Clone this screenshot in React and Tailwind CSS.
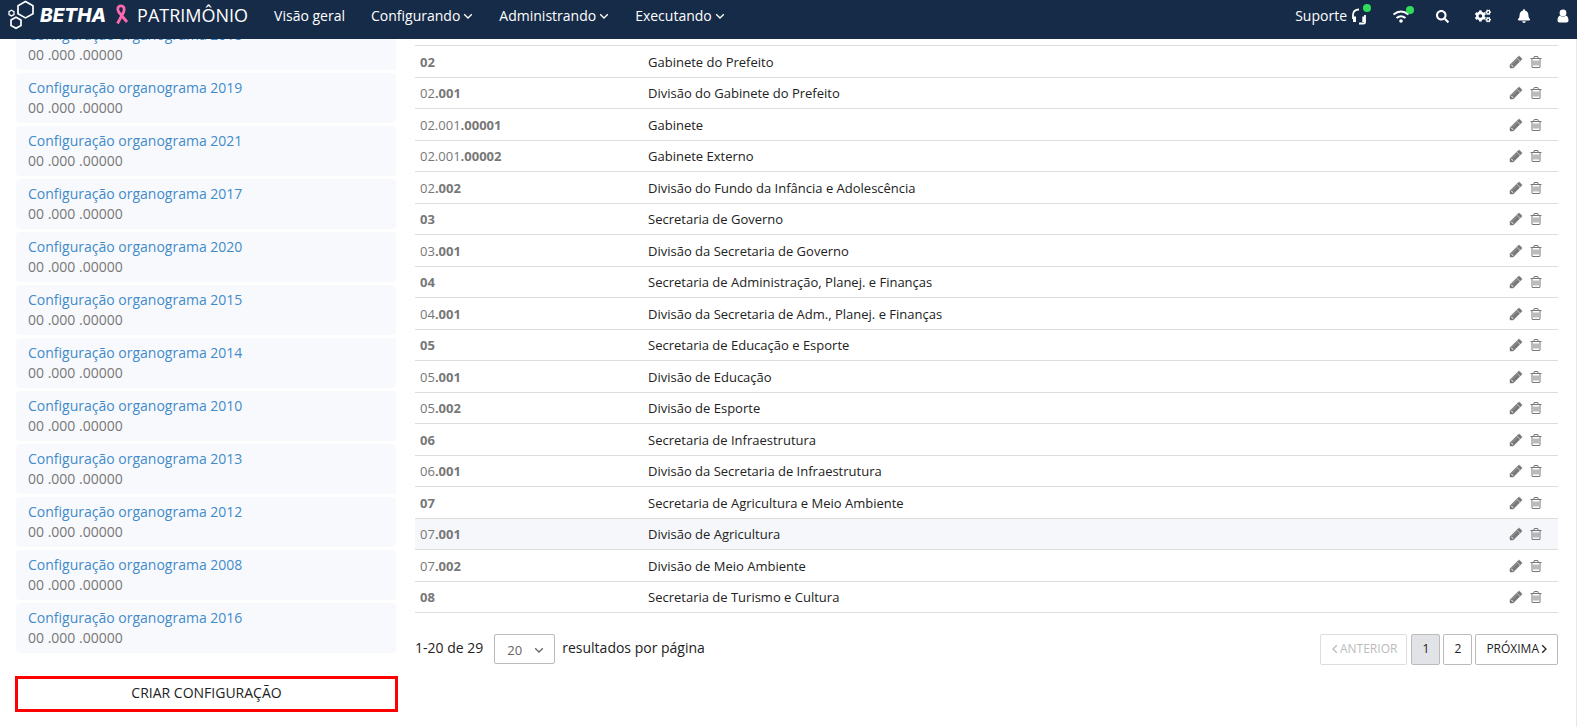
import React from 'react';
import { FaBell, FaCogs, FaSearch } from 'react-icons/fa';

const configs = [2018, 2019, 2021, 2017, 2020, 2015, 2014, 2010, 2013, 2012, 2008, 2016];

const rows = [
  ['', '02', 'Gabinete do Prefeito'],
  ['02', '.001', 'Divisão do Gabinete do Prefeito'],
  ['02.001', '.00001', 'Gabinete'],
  ['02.001', '.00002', 'Gabinete Externo'],
  ['02', '.002', 'Divisão do Fundo da Infância e Adolescência'],
  ['', '03', 'Secretaria de Governo'],
  ['03', '.001', 'Divisão da Secretaria de Governo'],
  ['', '04', 'Secretaria de Administração, Planej. e Finanças'],
  ['04', '.001', 'Divisão da Secretaria de Adm., Planej. e Finanças'],
  ['', '05', 'Secretaria de Educação e Esporte'],
  ['05', '.001', 'Divisão de Educação'],
  ['05', '.002', 'Divisão de Esporte'],
  ['', '06', 'Secretaria de Infraestrutura'],
  ['06', '.001', 'Divisão da Secretaria de Infraestrutura'],
  ['', '07', 'Secretaria de Agricultura e Meio Ambiente'],
  ['07', '.001', 'Divisão de Agricultura'],
  ['07', '.002', 'Divisão de Meio Ambiente'],
  ['', '08', 'Secretaria de Turismo e Cultura'],
];

function Pencil() {
  return (
    <svg viewBox="0 0 1792 1792" className="size-[14px]" fill="currentColor" stroke="currentColor" strokeWidth="60">
      <path d="M491 1536l91-91-235-235-91 91v107h128v128h107zm523-928q0-22-22-22-10 0-17 7l-542 542q-7 7-7 17 0 22 22 22 10 0 17-7l542-542q7-7 7-17zm-54-192l416 416-832 832h-416v-416zm683 96q0 53-37 90l-166 166-416-416 166-165q36-38 90-38 53 0 91 38l235 234q37 39 37 91z" />
    </svg>
  );
}

function Trash() {
  return (
    <svg viewBox="0 0 1792 1792" className="size-[14px]" fill="currentColor">
      <path d="M704 736v576q0 14-9 23t-23 9h-64q-14 0-23-9t-9-23v-576q0-14 9-23t23-9h64q14 0 23 9t9 23zm256 0v576q0 14-9 23t-23 9h-64q-14 0-23-9t-9-23v-576q0-14 9-23t23-9h64q14 0 23 9t9 23zm256 0v576q0 14-9 23t-23 9h-64q-14 0-23-9t-9-23v-576q0-14 9-23t23-9h64q14 0 23 9t9 23zm128 724v-948h-896v948q0 22 7 40.5t14.5 27 10.5 8.5h832q3 0 10.5-8.5t14.5-27 7-40.5zm-672-1076h448l-48-117q-7-9-17-11h-317q-10 2-17 11zm928 32v64q0 14-9 23t-23 9h-96v948q0 83-47 143.5t-113 60.5h-832q-66 0-113-58.5t-47-141.5v-952h-96q-14 0-23-9t-9-23v-64q0-14 9-23t23-9h309l70-167q15-37 54-63t79-26h320q40 0 79 26t54 63l70 167h309q14 0 23 9t9 23z" />
    </svg>
  );
}

function Chevron({ className }) {
  return (
    <svg viewBox="0 0 10 10" className={className} fill="none" stroke="currentColor" strokeWidth="1.300">
      <path d="M1.200 3.200L5 7l3.800-3.800" />
    </svg>
  );
}

function Logo() {
  return (
    <svg viewBox="0 0 28 30" className="h-[30px] w-7" fill="none" stroke="#fff" strokeWidth="1.700">
      <path d="M17.500 1.500l7.500 4.200v8l-7.500 4.200-7.500-4.200v-8z" />
      <path d="M8 17.300l5 2.800v5.400l-5 2.800-5-2.800v-5.400z" />
      <path d="M3.500 10.300l2.500 1.400v2.800l-2.500 1.400-2.500-1.400v-2.800z" strokeWidth="1.300" />
    </svg>
  );
}

function Ribbon() {
  return (
    <svg viewBox="0 0 14 21" className="h-[21px] w-[14px]" fill="none" stroke="#ff69ad" strokeWidth="2.800">
      <path d="M12 18L4 8.500C1.500 5 3 1.800 6 1.800S10 5 8.500 8.500L2.500 19.500" />
    </svg>
  );
}

function Headset() {
  return (
    <svg viewBox="0 0 16 18" className="h-[18px] w-4" fill="none" stroke="#fff">
      <path d="M2 12V8Q2 2.500 8 2.500M14 8v7.500Q14 16.500 12.500 16.500H8" strokeWidth="1.800" />
      <path d="M3.500 9.500v5.500M12.800 9.500v5.500" strokeWidth="3" />
    </svg>
  );
}

function Wifi() {
  return (
    <svg viewBox="0 0 18 14" className="h-[14px] w-[18px]" fill="none" stroke="#fff" strokeWidth="2">
      <path d="M1.500 5.500Q9-.5 16.500 5.500M4.500 9Q9 5.500 13.500 9" />
      <circle cx="9" cy="12" r="1.800" fill="#fff" stroke="none" />
    </svg>
  );
}

function User() {
  return (
    <svg viewBox="0 0 12 14" className="h-[14px] w-3" fill="#fff">
      <circle cx="6" cy="4" r="3.400" />
      <path d="M3 6.500Q6 9 9 6.500Q11.500 7.500 11.500 11.500Q11.500 13.500 9.500 13.500H2.500Q.5 13.500.5 11.500Q.5 7.500 3 6.500z" />
    </svg>
  );
}

function Dot() {
  return <span className="absolute -top-[3px] -right-1 size-2 rounded-full bg-[#2fdc5b]" />;
}

export default function App() {
  return (
    <div className="min-h-screen border-r border-[#e8e8e8] bg-white font-['Open_Sans',sans-serif] text-[14px] leading-5 text-[#222]">
      {/* Top bar */}
      <header className="relative z-10 -mr-px flex h-[39px] items-start bg-[#162b48] px-2 text-white">
        <a href="#" className="flex items-start">
          <Logo />
          <span className="mt-1 ml-1 font-['Inter',sans-serif] text-[19px] leading-6 font-extrabold italic">BETHA</span>
          <span className="mt-1 ml-[9px]"><Ribbon /></span>
          <span className="ml-2 text-[18px] leading-[30px]">PATRIMÔNIO</span>
        </a>
        <nav className="ml-[26px] flex gap-[26px] pt-[6px]">
          <a href="#">Visão geral</a>
          {['Configurando', 'Administrando', 'Executando'].map((item) => (
            <a key={item} href="#" className="flex items-center gap-[3px]">
              {item}
              <Chevron className="size-[10px]" />
            </a>
          ))}
        </nav>
        <div className="ml-auto flex h-8 items-center">
          <a href="#" className="flex items-center gap-1">
            Suporte
            <span className="relative flex"><Headset /><Dot /></span>
          </a>
          <button aria-label="Conexão" className="relative ml-[25px]"><Wifi /><Dot /></button>
          <button aria-label="Buscar" className="ml-[26px]"><FaSearch size={13} /></button>
          <button aria-label="Configurações" className="ml-[26px]"><FaCogs size={16} /></button>
          <button aria-label="Notificações" className="ml-[26px]"><FaBell size={14} /></button>
          <button aria-label="Usuário" className="ml-[26px]"><User /></button>
        </div>
      </header>

      <main className="flex gap-[19px] pr-[18px] pl-4">
        {/* Configurations, scrolled below the top bar */}
        <aside className="-mt-[19px] w-[380px] shrink-0">
          <ul className="flex flex-col gap-[3px]">
            {configs.map((year) => (
              <li key={year} className="h-[50px] rounded bg-[#f8f9fd] px-3 pt-[5px]">
                <a href="#" className="block text-[#428bca]">Configuração organograma {year}</a>
                <p className="text-[#777]">00 .000 .00000</p>
              </li>
            ))}
          </ul>
          <button className="mt-[23px] -ml-px h-9 w-[383px] border-3 border-[#f00] pb-[2px]">CRIAR CONFIGURAÇÃO</button>
        </aside>

        <section className="mt-[6px] min-w-0 flex-1">
          <table className="w-full table-fixed border-separate border-spacing-0 border-t border-[#ddd] text-[13px]">
            <tbody>
              {rows.map(([prefix, code, name]) => (
                <tr
                  key={prefix + code}
                  className={code === '.001' && prefix === '07' ? 'h-8 bg-[#f5f7fb] even:h-[31px]' : 'h-8 even:h-[31px]'}
                >
                  <td className="w-[227px] border-b border-[#ddd] px-[5px] text-[#777]">
                    {prefix}<b>{code}</b>
                  </td>
                  <td className="border-b border-[#ddd] px-[6px]">{name}</td>
                  <td className="w-[60px] border-b border-[#ddd] text-[#777]">
                    <div className="flex items-center gap-[6px] pl-[11px]">
                      <button aria-label="Editar"><Pencil /></button>
                      <button aria-label="Excluir"><Trash /></button>
                    </div>
                  </td>
                </tr>
              ))}
            </tbody>
          </table>

          {/* Pagination */}
          <div className="mt-[21px] flex items-start justify-between">
            <div className="flex items-start">
              <span className="pt-1">1-20 de 29</span>
              <div className="relative ml-[11px]">
                <select aria-label="Resultados por página" defaultValue="20" className="h-[30px] w-[61px] appearance-none rounded-xs border border-[#bbb] bg-white pt-[2px] pl-3 text-[13px] text-[#666]">
                  <option>20</option>
                  <option>50</option>
                </select>
                <Chevron className="pointer-events-none absolute top-[11px] right-[11px] size-[10px] text-[#666]" />
              </div>
              <span className="ml-[7px] pt-1">resultados por página</span>
            </div>
            <div className="flex gap-[3px] text-[12px]">
              <button disabled className="mr-px flex h-[31px] items-center rounded-xs border border-[#ddd] px-[9px] pb-[2px] text-[#bbb]">
                <Chevron className="size-[10px] rotate-90" />
                ANTERIOR
              </button>
              <button className="h-[31px] w-[29px] rounded-xs border border-[#bbb] bg-[#e2e3e7] pb-[2px]">1</button>
              <button className="h-[31px] w-[29px] rounded-xs border border-[#bbb] pb-[2px]">2</button>
              <button className="flex h-[31px] items-center rounded-xs border border-[#bbb] pr-[8px] pb-[2px] pl-[10px]">
                PRÓXIMA
                <Chevron className="size-[10px] -rotate-90" />
              </button>
            </div>
          </div>
        </section>
      </main>
    </div>
  );
}
